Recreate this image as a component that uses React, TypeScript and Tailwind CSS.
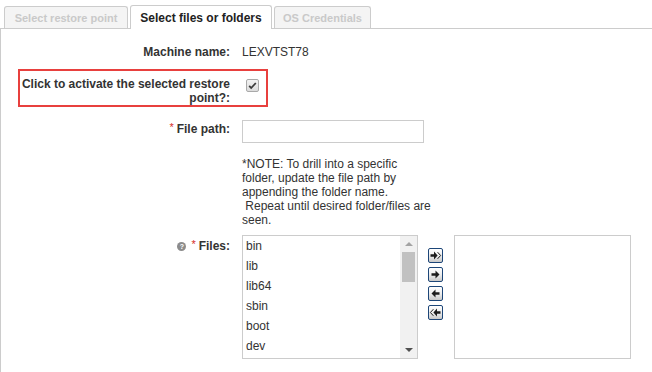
import React from "react";

const files = ["bin", "lib", "lib64", "sbin", "boot", "dev"];

function Arrow({ dir, all }: { dir: "right" | "left"; all?: boolean }) {
  return (
    <svg
      viewBox="0 0 13 13"
      className="w-[13px] h-[13px]"
      style={dir === "left" ? { transform: "scaleX(-1)" } : undefined}
    >
      {all ? (
        <>
          <path d="M1.5 5.3h3.5V2.6l3.6 3.9-3.6 3.9V7.7H1.5z" fill="#1c1c1c" />
          <path d="M8.6 3.2l3 3.3-3 3.3" fill="none" stroke="#1c1c1c" strokeWidth="1" />
        </>
      ) : (
        <path d="M2.5 5.3h4V2.4l4 4.1-4 4.1V7.7h-4z" fill="#1c1c1c" />
      )}
    </svg>
  );
}

function MoveButton({ dir, all }: { dir: "right" | "left"; all?: boolean }) {
  return (
    <button className="w-[15px] h-[15px] border border-[#1d4678] rounded-[2px] bg-gradient-to-b from-[#ffffff] via-[#eeeeee] to-[#c9c9c9] flex items-center justify-center p-0">
      <Arrow dir={dir} all={all} />
    </button>
  );
}

function Req() {
  return <span className="text-[#d42b2b] text-[11px] relative top-[-2px] mr-[3px] font-normal">*</span>;
}

export default function App() {
  return (
    <div
      className="w-[652px] h-[372px] overflow-hidden bg-white text-[#333333] text-[12px] leading-[14px]"
      style={{ fontFamily: '"Liberation Sans", Arial, sans-serif' }}
    >
      {/* tabs */}
      <div className="flex items-end gap-[2px] pl-[4px] h-[29px]">
        <div className="mb-[1px] w-[124px] h-[22px] border border-[#cccccc] border-b-0 rounded-t-[3px] bg-[#f4f4f4] text-[11px] font-bold text-[#c9c9c9] flex items-center justify-center">
          Select restore point
        </div>
        <div className="relative z-10 w-[142px] h-[24px] border border-[#cccccc] border-b-0 rounded-t-[3px] bg-white text-[12px] font-bold text-[#222222] flex items-center justify-center">
          Select files or folders
        </div>
        <div className="mb-[1px] w-[97px] h-[22px] border border-[#cccccc] border-b-0 rounded-t-[3px] bg-[#f4f4f4] text-[11px] font-bold text-[#c9c9c9] flex items-center justify-center">
          OS Credentials
        </div>
      </div>

      {/* panel */}
      <div className="-mt-px h-[400px] border-t border-l border-[#cccccc] pt-[14px] pl-[17px] flex flex-col">
        <div className="flex border-2 border-transparent">
          <div className="w-[210px] text-right font-bold text-[#333333]">Machine name:</div>
          <div className="ml-[12px]">LEXVTST78</div>
        </div>

        <div className="mt-[8px] w-[250px] flex items-start border-2 border-[#e8403e] pt-[6px]">
          <div className="w-[210px] text-right font-bold text-[#333333]">
            Click to activate the selected restore point?:
          </div>
          <span className="ml-[16px] mt-[2px] w-[13px] h-[13px] border border-[#a9a9a9] rounded-[2px] bg-gradient-to-b from-[#f2f2f2] to-[#dcdcdc] flex items-center justify-center">
            <svg viewBox="0 0 11 11" className="w-[11px] h-[11px]">
              <path d="M2.2 5.8l2 2.2 4.6-5" fill="none" stroke="#3a3a3a" strokeWidth="1.8" />
            </svg>
          </span>
        </div>

        <div className="mt-[11px] flex items-start border-2 border-transparent">
          <div className="w-[210px] text-right font-bold pt-[2px]">
            <Req />
            File path:
          </div>
          <input className="ml-[12px] w-[182px] h-[23px] border border-[#cccccc] outline-none px-[4px]" />
        </div>

        <div className="mt-[12px] ml-[224px] text-[#333333]">
          <div>*NOTE: To drill into a specific</div>
          <div>folder, update the file path by</div>
          <div>appending the folder name.</div>
          <div>&nbsp;Repeat until desired folder/files are</div>
          <div>seen.</div>
        </div>

        <div className="mt-[6px] flex items-start border-2 border-transparent">
          <div className="w-[210px] pt-[4px] flex justify-end items-center font-bold">
            <span className="w-[9px] h-[9px] rounded-full bg-[#8c8c8c] text-white text-[7px] leading-[9px] text-center mr-[5px]">
              ?
            </span>
            <Req />
            Files:
          </div>
          <div className="ml-[12px] w-[176px] h-[124px] border border-[#cccccc] flex">
            <div className="flex-1 pl-[3px]">
              {files.map((f) => (
                <div key={f} className="h-[20px] leading-[20px] text-[#333333]">
                  {f}
                </div>
              ))}
            </div>
            <div className="w-[17px] bg-[#f1f1f1] flex flex-col items-center">
              <div className="h-[16px] flex items-center justify-center">
                <span className="w-0 h-0 border-l-[4px] border-r-[4px] border-b-[4px] border-l-transparent border-r-transparent border-b-[#a3a3a3]" />
              </div>
              <div className="w-[13px] h-[30px] bg-[#c1c1c1]" />
              <div className="flex-1" />
              <div className="h-[16px] flex items-center justify-center">
                <span className="w-0 h-0 border-l-[4px] border-r-[4px] border-t-[4px] border-l-transparent border-r-transparent border-t-[#505050]" />
              </div>
            </div>
          </div>
          <div className="ml-[10px] mt-[13px] flex flex-col gap-[4px]">
            <MoveButton dir="right" all />
            <MoveButton dir="right" />
            <MoveButton dir="left" />
            <MoveButton dir="left" all />
          </div>
          <div className="ml-[11px] w-[177px] h-[124px] border border-[#cccccc]" />
        </div>
      </div>
    </div>
  );
}
